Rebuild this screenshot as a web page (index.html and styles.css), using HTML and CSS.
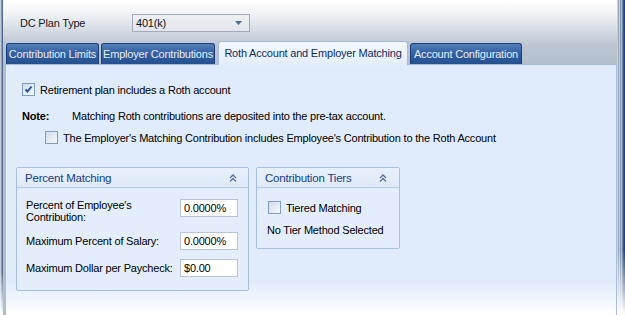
FILE: index.html
```html
<!DOCTYPE html>
<html>
<head>
<meta charset="utf-8">
<link rel="stylesheet" href="styles.css">
</head>
<body>
<div class="window">
  <div class="edge-left"></div>
  <div class="main">
    <div class="plan-row">
      <span class="plan-label">DC Plan Type</span>
      <div class="combo">
        <span class="combo-text">401(k)</span>
        <svg class="combo-arrow" width="7" height="4" viewBox="0 0 7 4"><path d="M0 0H7L3.5 4Z" fill="#4a6a9a"/></svg>
      </div>
    </div>
    <div class="tabs">
      <div class="tab t1">Contribution Limits</div>
      <div class="tab t2">Employer Contributions</div>
      <div class="tab active t3">Roth Account and Employer Matching</div>
      <div class="tab t4">Account Configuration</div>
    </div>
    <div class="panel">
      <div class="check-row roth">
        <span class="cb"><svg width="9" height="9" viewBox="0 0 9 9"><path d="M1.5 4.5L3.5 6.5L7.5 1.5" fill="none" stroke="#2352a8" stroke-width="2"/></svg></span>
        <span>Retirement plan includes a Roth account</span>
      </div>
      <div class="note">
        <b class="note-label">Note:</b>
        <span>Matching Roth contributions are deposited into the pre-tax account.</span>
      </div>
      <div class="check-row sub">
        <span class="cb"></span>
        <span>The Employer's Matching Contribution includes Employee's Contribution to the Roth Account</span>
      </div>
      <div class="groups">
        <section class="group pm">
          <div class="group-head">
            <span>Percent Matching</span>
            <svg class="chev" width="8" height="8" viewBox="0 0 8 8"><path d="M1 4L4 1L7 4M1 7.5L4 4.5L7 7.5" fill="none" stroke="#5a77a6" stroke-width="1.4"/></svg>
          </div>
          <div class="pm-body">
            <div class="lbl first">Percent of Employee's<br>Contribution:</div>
            <div class="field first">0.0000%</div>
            <div class="lbl">Maximum Percent of Salary:</div>
            <div class="field">0.0000%</div>
            <div class="lbl">Maximum Dollar per Paycheck:</div>
            <div class="field">$0.00</div>
          </div>
        </section>
        <section class="group tiers">
          <div class="group-head">
            <span>Contribution Tiers</span>
            <svg class="chev" width="8" height="8" viewBox="0 0 8 8"><path d="M1 4L4 1L7 4M1 7.5L4 4.5L7 7.5" fill="none" stroke="#5a77a6" stroke-width="1.4"/></svg>
          </div>
          <div class="tiers-body">
            <div class="check-row tiered">
              <span class="cb"></span>
              <span>Tiered Matching</span>
            </div>
            <div class="tier-note">No Tier Method Selected</div>
          </div>
        </section>
      </div>
    </div>
  </div>
  <div class="edge-right"></div>
</div>
</body>
</html>
```
FILE: styles.css
```css
html, body {
  margin: 0;
  padding: 0;
  background: #ffffff;
}
body {
  font-family: "Liberation Sans", Arial, sans-serif;
  font-size: 11px;
  letter-spacing: -0.2px;
  color: #000;
}
.window {
  width: 625px;
  height: 315px;
  display: flex;
  overflow: hidden;
  background: linear-gradient(to bottom, #ffffff 0px, #f3f5f8 12px, #d6dce5 30px, #bcc6d3 45px, #b4bfcd 64px);
}
.edge-left {
  width: 3px;
  flex: none;
  background:
    linear-gradient(to bottom, rgba(255,255,255,0) 270px, #ffffff 315px),
    linear-gradient(to right, #c5ccd8 0, #c5ccd8 1px, #8c9cb6 1px, #8c9cb6 2px, #4f6c98 2px);
}
.edge-right {
  width: 8px;
  flex: none;
  background:
    linear-gradient(to bottom, rgba(255,255,255,0) 250px, #ffffff 315px),
    linear-gradient(to right, #c9d0da 0, #c9d0da 1px, #9aa8bc 1px, #9aa8bc 2px, #c4ccd8 2px, #c4ccd8 3px, #8a9bb4 3px, #8a9bb4 4px, #b0bccc 4px, #b0bccc 5px, #6d84a8 5px, #6d84a8 6px, #2f5a94 6px, #2f5a94 7px, #1b4583 7px);
}
.main {
  flex: 1;
  display: flex;
  flex-direction: column;
  min-width: 0;
}
.plan-row {
  display: flex;
  align-items: center;
  height: 18px;
  margin-top: 14px;
}
.plan-label {
  width: 112px;
  padding-left: 17px;
  color: #1a1a1a;
}
.combo {
  height: 16px;
  border: 1px solid #a3abb8;
  background: linear-gradient(to bottom, #eef0f3, #e2e6ec);
  display: flex;
  align-items: center;
  justify-content: space-between;
  padding: 0 7px 0 3px;
  box-sizing: content-box;
  width: 106px;
}
.combo-text {
  color: #111;
}
.tabs {
  display: flex;
  align-items: flex-end;
  gap: 2px;
  margin-top: 8px;
  padding-left: 3px;
  height: 24px;
  position: relative;
  z-index: 1;
}
.tab {
  height: 21px;
  box-sizing: border-box;
  border: 1px solid #1a3e78;
  border-bottom: none;
  border-radius: 3px 3px 0 0;
  background: linear-gradient(to bottom, #5680bb 0, #3563a5 40%, #24508f 100%);
  color: #e6edf8;
  display: flex;
  align-items: center;
  justify-content: center;
  white-space: nowrap;
}
.t1 { width: 93px; }
.t2 { width: 114px; }
.t3 { width: 190px; margin-left: 1px; }
.t4 { width: 112px; }
.tab.active {
  height: 24px;
  border: 1px solid #a5bcdc;
  border-bottom: none;
  background: linear-gradient(to bottom, #f4f8fe, #e3edfb);
  color: #0e2d66;
  margin-bottom: -1px;
  padding-bottom: 1px;
}
.panel {
  flex: 1;
  margin-left: 2px;
  border: 1px solid #a9bfdd;
  border-bottom: none;
  background: linear-gradient(to bottom, #e0ebfb 0, #e0ebfb 215px, #ffffff 250px);
  padding-top: 18px;
  padding-left: 16px;
}
.check-row {
  display: flex;
  align-items: center;
  gap: 5px;
  height: 13px;
}
.cb {
  width: 11px;
  height: 11px;
  border: 1px solid #7f9cc6;
  background: linear-gradient(135deg, #d4dcea, #f6f8fb);
  display: flex;
  align-items: center;
  justify-content: center;
  flex: none;
}
.cb svg { display: block; }
.note {
  display: flex;
  align-items: center;
  margin-top: 13px;
  height: 13px;
}
.note-label {
  width: 50px;
  font-weight: bold;
}
.sub {
  margin-top: 9px;
  margin-left: 23px;
}
.groups {
  display: flex;
  align-items: flex-start;
  gap: 7px;
  margin-top: 23px;
  margin-left: -6px;
}
.group {
  border: 1px solid #a7c1e4;
  border-radius: 2px;
  background: #e3edfb;
  box-sizing: border-box;
}
.group-head {
  height: 19px;
  border-bottom: 1px solid #b3cbea;
  background: linear-gradient(to bottom, #e8f0fc, #dfe9f8);
  display: flex;
  align-items: center;
  justify-content: space-between;
  padding: 0 11px 0 8px;
  color: #15408a;
  font-size: 11.5px;
}
.chev { display: block; }
.pm { width: 233px; height: 124px; }
.tiers { width: 144px; height: 82px; }
.tiers .group-head { padding-right: 12px; }
.pm-body {
  display: grid;
  grid-template-columns: 154px 58px;
  align-items: center;
  row-gap: 9px;
  padding: 11px 0 0 9px;
}
.pm-body .lbl { line-height: 12px; }
.pm-body .first { align-self: start; }
.field {
  height: 18px;
  box-sizing: border-box;
  border: 1px solid #b9c4d4;
  background: #ffffff;
  padding-left: 3px;
  display: flex;
  align-items: center;
}
.tiers-body {
  padding: 13px 0 0 11px;
}
.tier-note {
  margin-top: 10px;
  margin-left: -1px;
}
```
